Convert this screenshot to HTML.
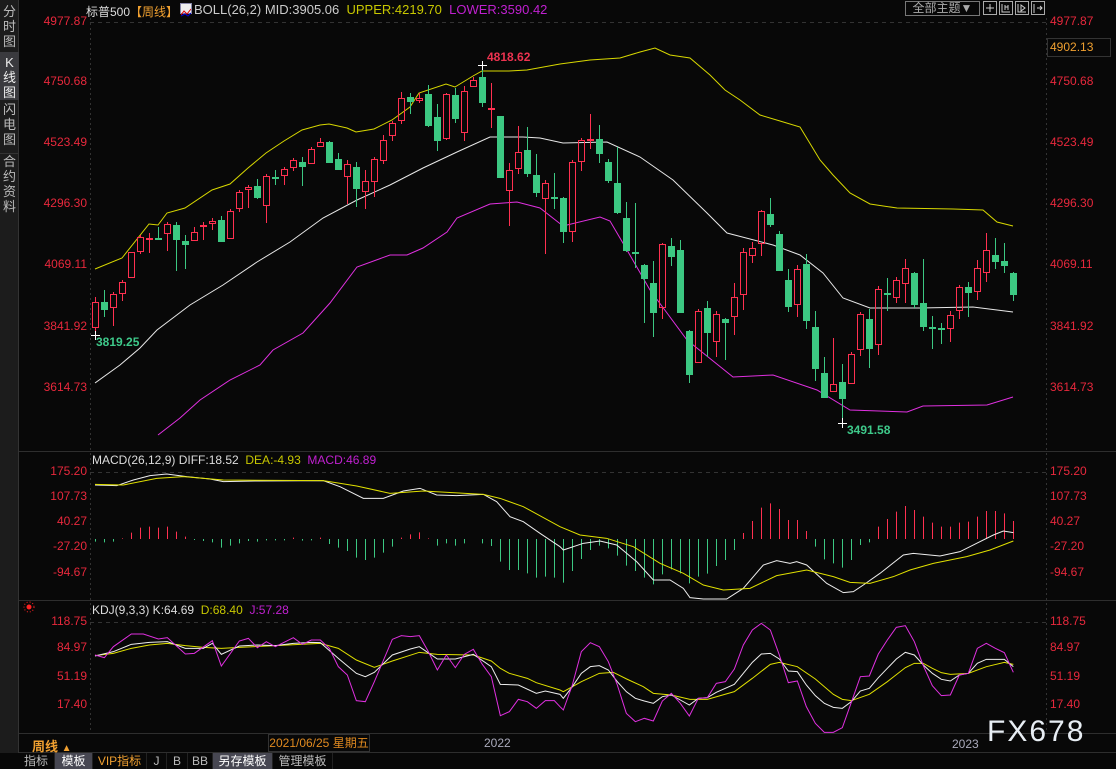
<!DOCTYPE html>
<html><head><meta charset="utf-8">
<style>
*{margin:0;padding:0;box-sizing:border-box}
html,body{width:1116px;height:769px;background:#080808;overflow:hidden;font-family:"Liberation Sans","Noto Sans CJK SC",sans-serif}
#wrap{position:relative;width:1116px;height:769px}
.side{position:absolute;left:0;top:0;width:19px;height:753px;background:#1c1c1c;border-right:1px solid #333}
.tab{position:absolute;left:0;width:19px;color:#bbb;font-size:13px;line-height:15px;text-align:center}
.t{position:absolute;white-space:nowrap;font-size:12px}
.bt{position:absolute;top:753px;height:16px;font-size:12px;line-height:16px;color:#bbb;text-align:center;border-right:1px solid #222}
</style></head><body><div id="wrap">
<div class="side">
 <div class="tab" style="top:4px">分<br>时<br>图</div>
 <div class="tab" style="top:52px;height:48px;background:#3a3a3e;padding-top:3px;color:#eee">K<br>线<br>图</div>
 <div class="tab" style="top:102px">闪<br>电<br>图</div>
 <div class="tab" style="top:153px;border-top:1px solid #333">合<br>约<br>资<br>料</div>
</div>
<svg id="s" width="1116" height="769" style="position:absolute;left:0;top:0"></svg>
<div class="t" style="left:86px;top:3px;font-size:12px;color:#ddd">标普500<span style="color:#f0a030">【周线】</span></div>
<div style="position:absolute;left:180px;top:3px;width:12px;height:11px;background:#eee;border:1px solid #88a"><svg width="10" height="9"><polyline points="0,7 3,3 6,6 10,1" fill="none" stroke="#d00"/><polyline points="0,8 4,6 7,8 10,5" fill="none" stroke="#00c"/></svg></div>
<div class="t" style="left:194px;top:2px;font-size:13px;color:#ccc">BOLL(26,2) MID:3905.06 &nbsp;<span style="color:#c8c800">UPPER:4219.70</span> &nbsp;<span style="color:#c020d0">LOWER:3590.42</span></div>
<div class="t" style="left:905px;top:1px;width:75px;height:15px;border:1px solid #777;color:#aaa;font-size:12px;line-height:13px;text-align:center">全部主题▼</div>
<div style="position:absolute;left:983px;top:1px;width:14px;height:14px;border:1px solid #aaa"></div>
<div style="position:absolute;left:999px;top:1px;width:14px;height:14px;border:1px solid #aaa"></div>
<div style="position:absolute;left:1015px;top:1px;width:14px;height:14px;border:1px solid #aaa"></div>
<div style="position:absolute;left:1031px;top:1px;width:14px;height:14px;border:1px solid #aaa"></div>
<div class="t" style="left:1047px;top:38px;width:64px;height:19px;border:1px solid #333;color:#f0a030;font-size:12px;line-height:17px;padding-left:2px">4902.13</div>
<div class="t" style="left:92px;top:453px;color:#ddd">MACD(26,12,9) DIFF:18.52 &nbsp;<span style="color:#c8c800">DEA:-4.93</span> &nbsp;<span style="color:#c020d0">MACD:46.89</span></div>
<div class="t" style="left:92px;top:603px;color:#ddd">KDJ(9,3,3) K:64.69 &nbsp;<span style="color:#c8c800">D:68.40</span> &nbsp;<span style="color:#c020d0">J:57.28</span></div>
<div class="t" style="left:96px;top:335px;color:#3ec98a;font-weight:bold">3819.25</div>
<div class="t" style="left:487px;top:50px;color:#ee3350;font-weight:bold">4818.62</div>
<div class="t" style="left:847px;top:423px;color:#3ec98a;font-weight:bold">3491.58</div>
<div class="t" style="left:32px;top:736px;color:#f0a030;font-weight:bold;font-size:13px">周线 <span style="font-size:10px">▲</span></div>
<div class="t" style="left:268px;top:734px;width:102px;height:18px;border:1px solid #333;color:#e08a20;line-height:16px;text-align:center">2021/06/25 星期五</div>
<div class="t" style="left:484px;top:736px;color:#aab;">2022</div>
<div class="t" style="left:952px;top:737px;color:#aab;">2023</div>
<div class="t" style="left:987px;top:715px;color:#e8eef4;font-size:30px;letter-spacing:2px">FX678</div>
<div class="bt" style="left:18px;width:37px">指标</div>
<div class="bt" style="left:55px;width:38px;background:#474752;color:#fff">模板</div>
<div class="bt" style="left:93px;width:54px;color:#f0a030">VIP指标</div>
<div class="bt" style="left:147px;width:20px">J</div>
<div class="bt" style="left:167px;width:21px">B</div>
<div class="bt" style="left:188px;width:25px">BB</div>
<div class="bt" style="left:213px;width:60px;background:#474752;color:#fff">另存模板</div>
<div class="bt" style="left:273px;width:60px">管理模板</div>
</div>
<script>
const S=document.getElementById('s');let h='';
const R='#ff3050',G='#3cc882';
function ln(x1,y1,x2,y2,c,d){h+=`<line x1="${x1}" y1="${y1}" x2="${x2}" y2="${y2}" stroke="${c}" stroke-width="1"${d?' stroke-dasharray="'+d+'"':''}/>`}
function tx(x,y,t,c,a){h+=`<text x="${x}" y="${y}" fill="${c}" font-size="12" text-anchor="${a||'start'}" dominant-baseline="middle">${t}</text>`}
ln(90.5,18,90.5,733,'#333','2,3');ln(1046.5,18,1046.5,733,'#333','2,3');
ln(19,451.5,1116,451.5,'#2e2e2e');ln(19,600.5,1116,600.5,'#2e2e2e');ln(19,733.5,1116,733.5,'#2e2e2e');ln(19,752.5,1116,752.5,'#2e2e2e');
ln(90,22.5,1046,22.5,'#333','4,4');ln(90,472.5,1046,472.5,'#333','4,4');ln(90,622.5,1046,622.5,'#333','4,4');
const L1=[['4977.87',22],['4750.68',82],['4523.49',143],['4296.30',204],['4069.11',265],['3841.92',327],['3614.73',388]];
const L2=[['175.20',472],['107.73',497],['40.27',522],['-27.20',547],['-94.67',573]];
const L3=[['118.75',622],['84.97',648],['51.19',677],['17.40',705]];
[L1,L2,L3].forEach(L=>L.forEach(([t,y])=>{tx(87,y,t,'#e8283c','end');tx(1050,y,t,'#e8283c')}));
h+=`<circle cx="29" cy="607" r="2.5" fill="#f22"/><circle cx="29" cy="607" r="5" fill="none" stroke="#f22" stroke-dasharray="1,2"/>`;
function poly(pts,c){h+=`<polyline points="${pts.map(p=>p.join(',')).join(' ')}" fill="none" stroke="${c}" stroke-width="1"/>`}
poly([[95,269],[122,258],[149,224],[158,225],[167,213],[185,208],[212,190],[230,184],[248,168],[266,153],[284,141],[302,130],[320,125],[329,124],[347,128],[356,132],[374,129],[392,120],[410,107],[419,93],[446,84],[455,87],[473,76],[482,71],[509,71],[527,70],[560,64],[590,60],[620,58],[640,52],[655,48],[670,55],[690,58],[710,75],[725,90],[740,100],[760,115],[780,121],[800,127],[820,160],[833,175],[850,193],[870,204],[897,208],[953,209],[983,210],[997,222],[1013,226]],'#d8d800');
poly([[95,383],[120,365],[140,348],[157,330],[190,305],[223,285],[257,262],[290,242],[323,218],[357,200],[390,185],[423,168],[457,152],[490,137],[523,137],[540,138],[563,143],[607,142],[640,157],[673,180],[707,213],[727,233],[773,245],[800,255],[823,273],[843,298],[870,308],[920,308],[973,307],[1013,312]],'#e8e8e8');
poly([[158,435],[180,418],[200,400],[230,380],[260,365],[273,350],[303,333],[330,303],[357,267],[390,255],[407,255],[423,248],[447,232],[457,218],[490,204],[517,202],[540,208],[563,226],[600,217],[610,221],[627,250],[650,290],[687,340],[733,377],[773,375],[817,390],[850,410],[907,412],[923,406],[987,405],[1013,397]],'#e030e0');
const C=[['r',302,328,297,335],['g',302,310,290,317],['r',294,308,292,326],['r',282,294,280,301],['r',252,278,252,278],['r',237,252,235,254],['r',238,239,233,253],['g',238,239,227,238],['r',224,234,222,251],['g',225,240,222,271],['g',241,245,235,269],['r',232,241,227,241],['r',225,227,222,240],['r',221,224,218,230],['g',220,242,216,242],['r',211,239,209,239],['r',192,209,190,212],['r',187,190,185,208],['g',186,198,179,199],['r',176,206,174,223],['g',177,179,170,185],['r',169,176,167,185],['r',160,168,158,171],['g',162,167,157,186],['r',149,164,147,164],['r',142,147,138,147],['g',142,163,141,163],['g',159,170,153,170],['r',164,177,160,204],['g',167,189,162,207],['r',181,192,170,209],['r',159,182,157,197],['r',140,161,135,164],['r',123,136,121,141],['r',98,121,92,124],['g',97,102,93,114],['r',98,101,93,103],['g',94,126,85,127],['g',117,141,104,151],['r',94,139,93,140],['g',95,119,88,123],['r',91,133,86,141],['r',80,87,77,87],['g',77,103,65,107],['r',108,110,83,128],['g',116,178,116,178],['r',170,191,163,226],['r',152,169,126,174],['g',150,174,127,177],['g',175,193,154,197],['r',183,199,180,254],['g',197,198,173,209],
['g',198,232,197,243],['r',162,232,160,242],['r',140,162,138,171],['r',139,141,114,149],['g',139,154,125,163],['g',162,181,159,183],['g',183,213,147,214],['g',218,251,202,252],['g',252,253,203,268],['g',265,279,264,323],['g',283,313,261,337],['r',244,308,243,319],['g',246,257,238,266],['g',250,313,240,313],['g',331,375,330,383],['r',311,363,309,363],['g',308,333,301,357],['r',314,342,311,357],['g',319,323,318,360],['r',297,317,283,335],['r',252,295,248,310],['r',248,256,242,263],['r',211,244,210,256],['g',214,225,198,227],['g',234,271,231,271],['g',280,307,269,312],['r',269,305,265,317],['g',264,321,254,329],['g',327,369,311,381],['g',373,398,357,398],['r',384,392,338,392],['g',382,399,364,423],['r',354,384,352,384],['r',314,350,312,356],['g',319,349,309,368],['r',289,345,286,355],['g',293,295,278,311],['r',280,298,277,303],['r',268,284,259,303],['g',273,305,272,308],['g',303,327,259,331],['g',327,328,316,349],['g',328,330,323,344],['r',315,329,311,342],['r',287,311,285,319],['g',287,293,282,317],['r',268,292,260,300],['r',250,273,233,282],['g',255,262,238,269],['g',261,266,243,273],['g',273,295,272,301]];
C.forEach((c,i)=>{const x=95+9*i,col=c[0]=='r'?R:G;const xc=x+0.5;
 ln(xc,c[3],xc,c[1],col);ln(xc,c[2],xc,c[4],col);
 const hgt=Math.max(1,c[2]-c[1]);
 if(c[0]=='r'){if(hgt<=2)h+=`<rect x="${x-3}" y="${c[1]}" width="7" height="2" fill="${R}"/>`;else h+=`<rect x="${x-2.5}" y="${c[1]+.5}" width="6" height="${hgt-1}" fill="none" stroke="${R}"/>`}
 else h+=`<rect x="${x-3}" y="${c[1]}" width="7" height="${Math.max(2,hgt)}" fill="${G}"/>`;});
ln(91,335.5,100,335.5,'#fff');ln(95.5,331,95.5,340,'#fff');
ln(478,65.5,487,65.5,'#fff');ln(482.5,61,482.5,70,'#fff');
ln(838,423.5,847,423.5,'#fff');ln(842.5,418,842.5,428,'#fff');
const HB=[260,262,260,-250,-233,-218,-215,-218,-215,-230,-245,255,258,262,278,272,265,258,260,256,256,256,-248,257,256,-248,267,278,288,308,315,308,293,275,-248,-238,-232,-250,272,265,272,265,-252,265,273,320,345,345,355,368,365,368,
383,348,312,285,272,280,302,332,348,368,388,358,343,355,385,365,356,333,315,285,-234,-198,-158,-145,-162,-195,-195,-228,275,313,325,338,315,270,262,-215,-192,-170,-153,-165,-185,-203,-215,-215,-203,-200,-185,-168,-168,-175,-198];
HB.forEach((v,i)=>{const x=95+9*i+0.5,y=455+Math.abs(v)/3;ln(x,539,x,y,v<0?R:G)});
const z8=a=>a.map(([zx,zy])=>[90+zx/3,455+zy/3]),z9=a=>a.map(([zx,zy])=>[550+zx/3,455+zy/3]);
poly(z8([[15,90],[80,92],[130,75],[180,62],[230,57],[290,65],[360,72],[400,80],[500,78],[700,77],[750,95],[820,130],[880,130],[940,108],[990,100],[1040,120],[1100,122],[1180,118],[1220,140],[1260,185],[1300,200],[1350,235],[1410,275]]).concat(z9([[40,285],[100,265],[150,258],[200,270],[260,320],[310,375],[360,375],[400,400],[420,428],[460,432],[530,432],[580,400],[640,330],[680,317],[720,325],[740,320],[770,330],[830,385],[880,413],[910,410],[940,390],[990,355],[1060,300],[1090,295],[1170,303],[1230,290],[1280,265],[1330,240],[1360,228],[1390,233]])),'#eee');
poly(z8([[15,88],[100,90],[200,70],[280,65],[400,75],[700,77],[800,93],[900,115],[1000,108],[1180,118],[1230,130],[1300,155],[1410,215]]).concat(z9([[90,240],[170,250],[250,275],[330,325],[400,355],[460,390],[520,405],[600,400],[680,362],[770,345],[850,365],[900,382],[960,385],[1030,365],[1080,345],[1150,325],[1250,305],[1320,285],[1390,258]])),'#e0e000');
poly(z8([[15,602],[70,595],[124,580],[178,570],[232,565],[286,572],[340,577],[394,580],[448,577],[556,572],[691,565],[745,580],[799,615],[853,637],[907,618],[988,592],[1042,598],[1150,600],[1204,618],[1231,640],[1258,655],[1312,670],[1339,683],[1410,705]]).concat(z9([[40,710],[94,680],[148,655],[190,652],[230,672],[280,695],[310,715],[364,720],[420,733],[472,733],[553,710],[607,670],[661,628],[688,622],[742,635],[796,672],[850,718],[877,733],[904,737],[958,718],[1012,680],[1066,638],[1093,625],[1120,625],[1147,640],[1174,653],[1201,658],[1255,655],[1309,635],[1363,622],[1390,628]])),'#e0e000');
poly(z8([[15,603],[70,590],[124,568],[178,562],[232,560],[286,580],[340,580],[367,565],[394,598],[448,573],[502,570],[556,572],[610,565],[664,562],[691,563],[745,610],[799,655],[826,665],[853,652],[907,600],[961,582],[988,575],[1042,612],[1096,612],[1150,598],[1204,635],[1231,688],[1285,690],[1339,715],[1366,708],[1410,718]]).concat(z9([[40,730],[67,695],[94,655],[121,635],[148,632],[175,645],[202,680],[229,710],[256,730],[283,738],[310,745],[337,725],[364,720],[391,735],[418,750],[445,730],[472,728],[499,712],[553,688],[580,655],[607,622],[634,597],[661,595],[688,612],[715,648],[742,650],[769,690],[796,722],[823,745],[850,757],[877,760],[904,740],[931,708],[958,700],[985,668],[1012,640],[1039,612],[1066,592],[1093,600],[1120,630],[1147,655],[1174,673],[1201,678],[1228,660],[1255,655],[1282,625],[1309,613],[1363,613],[1390,635]])),'#eee');
poly(z8([[15,600],[43,608],[70,575],[124,537],[160,537],[205,552],[232,548],[286,597],[313,595],[367,557],[394,633],[448,558],[475,550],[502,578],[529,560],[556,575],[610,548],[637,568],[664,555],[691,555],[718,580],[745,635],[772,660],[799,737],[826,740],[853,680],[907,553],[934,542],[961,545],[988,542],[1015,590],[1042,645],[1069,600],[1096,638],[1123,598],[1150,583],[1177,628],[1204,665],[1231,782],[1258,770],[1285,733],[1312,740],[1339,760],[1366,737],[1393,737],[1410,755]]).concat(z9([[40,765],[67,690],[94,590],[121,563],[148,575],[175,620],[202,690],[229,775],[256,800],[283,790],[310,798],[337,738],[364,715],[391,745],[418,783],[445,730],[472,728],[499,685],[526,680],[553,642],[580,570],[607,525],[634,505],[661,525],[688,600],[715,683],[742,678],[769,755],[796,805],[823,832],[850,832],[877,818],[904,742],[931,665],[958,663],[985,597],[1012,555],[1039,517],[1066,512],[1093,560],[1120,632],[1147,692],[1174,722],[1201,720],[1228,660],[1255,655],[1282,580],[1309,565],[1336,580],[1363,593],[1390,652]])),'#e030e0');
h+=`<path d="M990 4v8M986 8h8" stroke="#ccc"/><path d="M1002 4v8h8M1005 5v5M1008 5v5M1005 7h3" stroke="#ccc" fill="none"/><path d="M1018 4v8h8M1021 5l4 3-4 3z" stroke="#ccc" fill="none"/><path d="M1034 4v9M1037 8h5M1040 6l2 2-2 2" stroke="#ccc" fill="none"/>`;
S.innerHTML=h;
</script>
</body></html>
